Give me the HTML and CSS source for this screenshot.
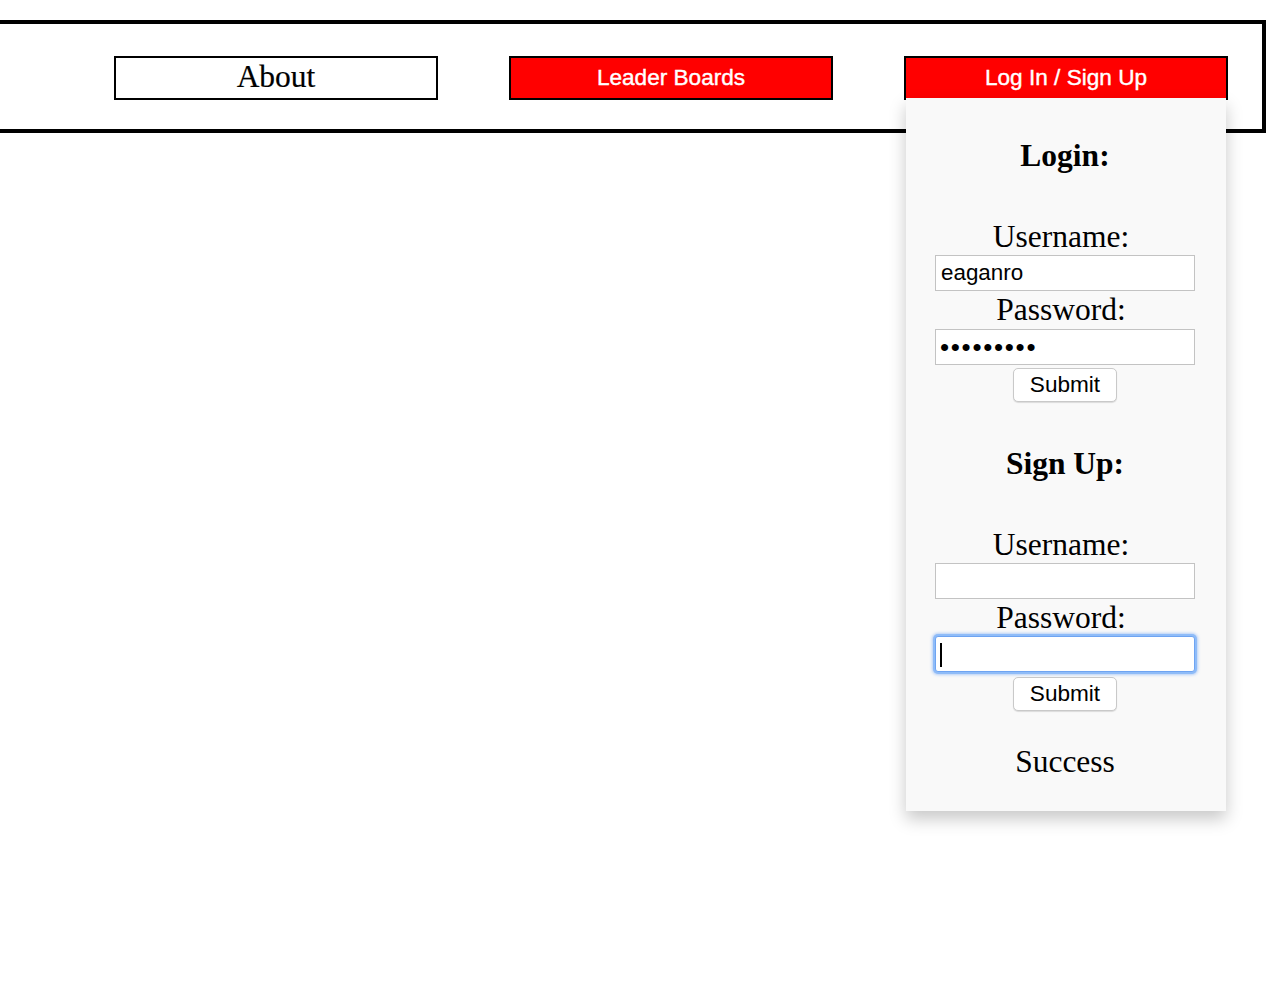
FILE: index.html
```html
<!DOCTYPE html>
<html lang="en">
<head>
<meta charset="utf-8">
<title>Game</title>
<link rel="stylesheet" href="styles.css">
</head>
<body>
<header class="topbar">
  <nav class="nav">
    <button class="nav-btn nav-about" type="button">About</button>
    <button class="nav-btn nav-red" type="button">Leader Boards</button>
    <div class="dropdown">
      <button class="nav-btn nav-red" type="button">Log In / Sign Up</button>
      <div class="dropdown-panel">
        <form class="auth-form login-form">
          <h3 class="auth-title">Login:</h3>
          <label class="auth-label" for="lu">Username:</label>
          <input class="auth-input" id="lu" type="text" value="eaganro">
          <label class="auth-label" for="lp">Password:</label>
          <input class="auth-input auth-password" id="lp" type="password" value="secretpwd">
          <button class="auth-submit" type="button">Submit</button>
        </form>
        <form class="auth-form signup-form">
          <h3 class="auth-title">Sign Up:</h3>
          <label class="auth-label" for="su">Username:</label>
          <input class="auth-input" id="su" type="text" value="">
          <label class="auth-label" for="sp">Password:</label>
          <span class="input-wrap">
            <input class="auth-input is-focused" id="sp" type="password" value="">
            <span class="caret"></span>
          </span>
          <button class="auth-submit submit-gap" type="button">Submit</button>
        </form>
        <p class="status">Success</p>
      </div>
    </div>
  </nav>
</header>
</body>
</html>
```

FILE: styles.css
```css
html, body {
  margin: 0;
  padding: 0;
  background: #ffffff;
  min-height: 100%;
}

html {
  height: 100%;
}

body {
  min-height: 986px;
  font-family: "Liberation Serif", "Times New Roman", serif;
  color: #000;
  overflow: visible;
}

.topbar {
  margin: 20px 12px 0 -10px;
  border: 4px solid #000;
  height: 113px;
  box-sizing: border-box;
  position: relative;
  z-index: 1;
  overflow: visible;
}

.nav {
  display: flex;
  column-gap: 71px;
  padding: 32px 0 0 120px;
  overflow: visible;
}

.nav-btn {
  width: 324px;
  height: 44px;
  box-sizing: border-box;
  border: 2px solid #000;
  margin: 0;
  padding: 0;
  display: block;
  cursor: pointer;
}

.nav-about {
  background: #fff;
  color: #000;
  font-family: "Liberation Serif", "Times New Roman", serif;
  font-size: 31.5px;
  line-height: 36px;
  padding-bottom: 3px;
  -webkit-text-stroke: 0.2px #000;
}

.nav-red {
  background: #ff0000;
  color: #fff;
  font-family: "Liberation Sans", Arial, sans-serif;
  font-size: 22.6px;
  line-height: 40px;
  -webkit-text-stroke: 0.4px #fff;
}

.dropdown {
  position: relative;
  width: 324px;
  height: 44px;
  overflow: visible;
}

.dropdown-panel {
  position: absolute;
  top: 42px;
  left: 2px;
  width: 320px;
  box-sizing: border-box;
  z-index: 5;
  background: #f9f9f9;
  box-shadow: 0 8px 16px 0 rgba(0, 0, 0, 0.22);
  padding: 40px 2px 31px 0;
  text-align: center;
}

.auth-form {
  display: flex;
  flex-direction: column;
  align-items: center;
  margin: 0;
}

.signup-form {
  margin-top: 44px;
}

.auth-title {
  margin: 0 0 44px;
  font-size: 31.5px;
  line-height: 36px;
  font-weight: bold;
}

.auth-label {
  display: block;
  font-size: 31.5px;
  line-height: 37px;
  padding-right: 8px;
}

.auth-input {
  display: block;
  width: 260px;
  height: 36px;
  box-sizing: border-box;
  margin: 0;
  border: 1px solid #c3c3c3;
  border-radius: 0;
  background: #fff;
  padding: 0 5px;
  font-family: "Liberation Sans", Arial, sans-serif;
  font-size: 22.4px;
  color: #000;
  outline: none;
}

.auth-password {
  margin-top: 1px;
  letter-spacing: 1.7px;
  font-size: 26px;
  padding-left: 4px;
}

.input-wrap {
  position: relative;
  display: block;
}

.is-focused {
  border: 1px solid #6ea4f2;
  box-shadow: 0 0 0 2px #8fbcf8, 0 0 3px 3px rgba(120, 170, 245, 0.55);
  border-radius: 3px;
}

.caret {
  position: absolute;
  left: 5px;
  top: 7px;
  width: 2px;
  height: 24px;
  background: #000;
}

.auth-submit {
  margin-top: 3px;
  height: 34px;
  padding: 0 16px;
  box-sizing: border-box;
  background: #fff;
  border: 1px solid #c9c9c9;
  border-radius: 5px;
  box-shadow: 0 1px 1px rgba(0, 0, 0, 0.12);
  font-family: "Liberation Sans", Arial, sans-serif;
  font-size: 22.6px;
  line-height: 32px;
  color: #000;
}

.submit-gap {
  margin-top: 5px;
}

.status {
  margin: 32px 0 0;
  font-size: 31.5px;
  line-height: 37px;
}
```
